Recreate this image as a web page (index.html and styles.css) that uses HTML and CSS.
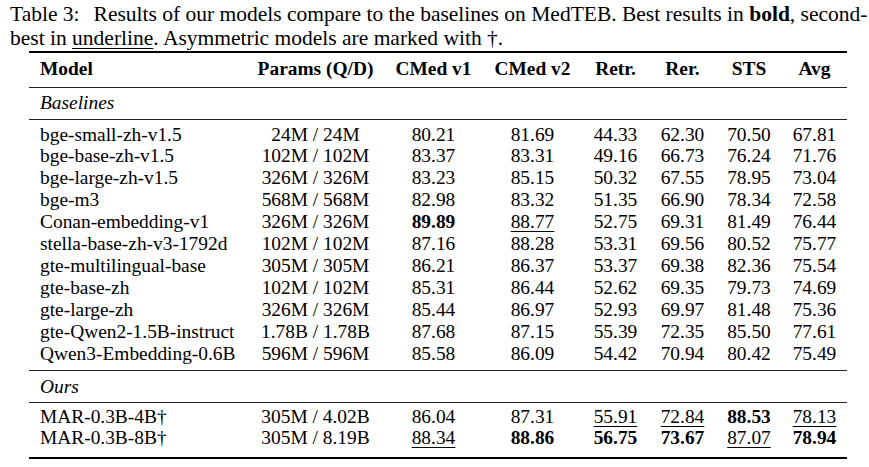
FILE: index.html
```html
<!DOCTYPE html>
<html>
<head>
<meta charset="utf-8">
<link rel="stylesheet" href="styles.css">
</head>
<body>
<div class="page">
  <p class="caption"><span class="label">Table 3:</span>Results of our models compare to the baselines on MedTEB. Best results in <b>bold</b>, second-<br>best in <u>underline</u>. Asymmetric models are marked with †.</p>
  <table class="results">
    <colgroup>
      <col class="c-model"><col class="c-params"><col class="c-cmed"><col class="c-cmed"><col class="c-num"><col class="c-num"><col class="c-sts"><col class="c-avg">
    </colgroup>
    <thead>
      <tr class="head">
        <th class="model">Model</th><th>Params (Q/D)</th><th>CMed v1</th><th>CMed v2</th><th>Retr.</th><th>Rer.</th><th>STS</th><th>Avg</th>
      </tr>
    </thead>
    <tbody>
      <tr class="section"><td class="model" colspan="8"><i>Baselines</i></td></tr>
      <tr class="first"><td class="model">bge-small-zh-v1.5</td><td>24M / 24M</td><td>80.21</td><td>81.69</td><td>44.33</td><td>62.30</td><td>70.50</td><td>67.81</td></tr>
      <tr><td class="model">bge-base-zh-v1.5</td><td>102M / 102M</td><td>83.37</td><td>83.31</td><td>49.16</td><td>66.73</td><td>76.24</td><td>71.76</td></tr>
      <tr><td class="model">bge-large-zh-v1.5</td><td>326M / 326M</td><td>83.23</td><td>85.15</td><td>50.32</td><td>67.55</td><td>78.95</td><td>73.04</td></tr>
      <tr><td class="model">bge-m3</td><td>568M / 568M</td><td>82.98</td><td>83.32</td><td>51.35</td><td>66.90</td><td>78.34</td><td>72.58</td></tr>
      <tr><td class="model">Conan-embedding-v1</td><td>326M / 326M</td><td><b>89.89</b></td><td><u>88.77</u></td><td>52.75</td><td>69.31</td><td>81.49</td><td>76.44</td></tr>
      <tr><td class="model">stella-base-zh-v3-1792d</td><td>102M / 102M</td><td>87.16</td><td>88.28</td><td>53.31</td><td>69.56</td><td>80.52</td><td>75.77</td></tr>
      <tr><td class="model">gte-multilingual-base</td><td>305M / 305M</td><td>86.21</td><td>86.37</td><td>53.37</td><td>69.38</td><td>82.36</td><td>75.54</td></tr>
      <tr><td class="model">gte-base-zh</td><td>102M / 102M</td><td>85.31</td><td>86.44</td><td>52.62</td><td>69.35</td><td>79.73</td><td>74.69</td></tr>
      <tr><td class="model">gte-large-zh</td><td>326M / 326M</td><td>85.44</td><td>86.97</td><td>52.93</td><td>69.97</td><td>81.48</td><td>75.36</td></tr>
      <tr><td class="model">gte-Qwen2-1.5B-instruct</td><td>1.78B / 1.78B</td><td>87.68</td><td>87.15</td><td>55.39</td><td>72.35</td><td>85.50</td><td>77.61</td></tr>
      <tr class="last"><td class="model">Qwen3-Embedding-0.6B</td><td>596M / 596M</td><td>85.58</td><td>86.09</td><td>54.42</td><td>70.94</td><td>80.42</td><td>75.49</td></tr>
    </tbody>
    <tbody>
      <tr class="section ours"><td class="model" colspan="8"><i>Ours</i></td></tr>
      <tr class="first ours-first"><td class="model">MAR-0.3B-4B†</td><td>305M / 4.02B</td><td>86.04</td><td>87.31</td><td><u>55.91</u></td><td><u>72.84</u></td><td><b>88.53</b></td><td><u>78.13</u></td></tr>
      <tr class="end"><td class="model">MAR-0.3B-8B†</td><td>305M / 8.19B</td><td><u>88.34</u></td><td><b>88.86</b></td><td><b>56.75</b></td><td><b>73.67</b></td><td><u>87.07</u></td><td><b>78.94</b></td></tr>
    </tbody>
  </table>
</div>
</body>
</html>
```

FILE: styles.css
```css
html, body {
  margin: 0;
  padding: 0;
  background: #ffffff;
}

.page {
  font-family: "Liberation Serif", "Times New Roman", serif;
  color: #000;
  padding: 2px 0 0 10px;
}

.caption {
  margin: 0;
  font-size: 21.5px;
  line-height: 24px;
  white-space: nowrap;
}

.caption .label {
  margin-right: 14px;
}

.caption u {
  text-decoration-thickness: 1px;
  text-underline-offset: 3px;
}

.results {
  margin: 1px 0 0 19px;
  border-collapse: separate;
  border-spacing: 0;
  table-layout: fixed;
  width: 818px;
  font-family: inherit;
  font-size: 19.4px;
  line-height: 21.9px;
}

.c-model { width: 218px; }
.c-params { width: 137px; }
.c-cmed { width: 99px; }
.c-num { width: 67px; }
.c-sts { width: 66px; }
.c-avg { width: 65px; }

.results th,
.results td {
  padding: 0;
  text-align: center;
  white-space: nowrap;
  font-weight: normal;
}

.results th {
  font-weight: bold;
}

.results .model {
  text-align: left;
  padding-left: 11px;
}

.head th {
  border-top: 2px solid #000;
  border-bottom: 1px solid #222;
  padding-top: 5px;
  padding-bottom: 7.1px;
}

.section td {
  border-bottom: 1px solid #222;
  padding-top: 3.6px;
  padding-bottom: 5.5px;
}

.first td {
  padding-top: 3.5px;
}

.last td {
  padding-bottom: 5.6px;
  border-bottom: 1px solid #222;
}

.ours td {
  padding-top: 4.5px;
  padding-bottom: 4.6px;
}

.ours-first td {
  padding-top: 2.5px;
}

.end td {
  padding-bottom: 7.2px;
  border-bottom: 2px solid #000;
}

.results u {
  text-decoration-thickness: 1px;
  text-underline-offset: 3px;
}
```
